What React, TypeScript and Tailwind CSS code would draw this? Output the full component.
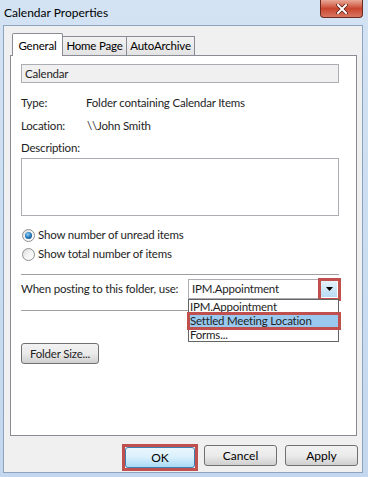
import React from "react";

const font = { fontFamily: 'Lato, "Noto Sans", Arial, sans-serif' };

function Radio({ checked }: { checked?: boolean }) {
  return (
    <span className="relative inline-flex h-[13px] w-[13px] shrink-0 items-center justify-center rounded-full border border-[#8e8f8f] bg-gradient-to-br from-[#dcdcdc] via-[#f4f4f4] to-[#ffffff]">
      {checked && (
        <span className="h-[7px] w-[7px] rounded-full bg-[radial-gradient(circle_at_40%_35%,#9ad2f5_0%,#2a7fc0_45%,#0e3f6a_100%)]" />
      )}
    </span>
  );
}

function Button({ children, def }: { children: React.ReactNode; def?: boolean }) {
  return (
    <div
      className={
        "flex h-[21px] items-center justify-center rounded-[3px] border text-[12px] text-black " +
        (def
          ? "w-[70px] border-[#3c7fb1] bg-gradient-to-b from-[#eaf6fd] via-[#d9f0fc] to-[#a7d9f5]"
          : "w-[73px] border-[#707070] bg-gradient-to-b from-[#f2f2f2] via-[#ebebeb] to-[#cfcfcf]")
      }
    >
      {children}
    </div>
  );
}

export default function App() {
  return (
    <div className="h-[477px] w-[368px] overflow-hidden whitespace-nowrap bg-gradient-to-b from-[#d3e3f4] to-[#c3d7ee]" style={font}>
      {/* title bar */}
      <div className="relative flex h-[25px] items-center pl-[4px]">
        <span className="text-[12px] text-black">Calendar Properties</span>
        <div className="absolute right-[5px] top-0 flex h-[18px] w-[43px] items-center justify-center rounded-b-[4px] border border-t-0 border-[#6b2a20] bg-gradient-to-b from-[#e8a999] via-[#c9452f] to-[#d8755f]">
          <svg width="12" height="10" viewBox="0 0 12 10">
            <path d="M2 1 L10 9 M10 1 L2 9" stroke="#5a1a10" strokeWidth="3.4" strokeLinecap="square" />
            <path d="M2 1 L10 9 M10 1 L2 9" stroke="#ffffff" strokeWidth="2" strokeLinecap="square" />
          </svg>
        </div>
      </div>

      {/* client area */}
      <div className="ml-[3px] mr-[5px] flex h-[448px] flex-col border border-[#8da4c0] bg-[#f0f0f0]">
        {/* tabs */}
        <div className="relative z-10 ml-[8px] mt-[7px] flex items-end text-[11.5px] tracking-[-0.2px]">
          <div className="flex h-[23px] w-[51px] items-start justify-center rounded-t-[2px] border border-b-0 border-[#898c95] bg-white pt-[3px]">
            General
          </div>
          <div className="mb-[1px] flex h-[19px] w-[64px] items-center justify-center border border-l-0 border-b-0 border-[#898c95] bg-gradient-to-b from-[#f2f2f2] to-[#e3e3e3]">
            Home Page
          </div>
          <div className="mb-[1px] flex h-[19px] w-[68px] items-center justify-center border border-l-0 border-b-0 border-[#898c95] bg-gradient-to-b from-[#f2f2f2] to-[#e3e3e3]">
            AutoArchive
          </div>
        </div>

        {/* panel */}
        <div className="relative ml-[6px] mr-[5px] -mt-[1px] flex h-[381px] flex-col border border-[#898c95] bg-white pl-[10px] pr-[17px] text-[11.5px] tracking-[-0.2px] text-[#1e1e1e]">
          <div className="mt-[8px] flex h-[19px] items-center border border-[#abadb3] bg-[#f0f0f0] pl-[3px]">
            Calendar
          </div>
          <div className="mt-[12px] flex h-[16px] items-center">
            <span className="w-[65px] shrink-0">Type:</span>
            <span>Folder containing Calendar Items</span>
          </div>
          <div className="mt-[7px] flex h-[16px] items-center">
            <span className="w-[66px] shrink-0">Location:</span>
            <span>\\John Smith</span>
          </div>
          <div className="mt-[6px] flex h-[16px] items-center">Description:</div>
          <div className="mt-[2px] h-[58px] border border-[#abadb3] bg-white" />

          <div className="mt-[11px] flex h-[16px] items-center gap-[3px] pl-[1px]">
            <Radio checked />
            <span>Show number of unread items</span>
          </div>
          <div className="mt-[3px] flex h-[16px] items-center gap-[3px] pl-[1px]">
            <Radio />
            <span>Show total number of items</span>
          </div>

          <div className="mt-[12px] h-px bg-[#a0a0a0]" />

          <div className="mt-[4px] flex items-center">
            <span className="w-[167px] shrink-0">When posting to this folder, use:</span>
            <div className="relative flex h-[20px] flex-1 items-center border border-[#abadb3] bg-white pl-[3px]">
              <span>IPM.Appointment</span>
              <div className="absolute right-[1px] top-[1px] flex h-[16px] w-[16px] items-center justify-center bg-gradient-to-b from-[#e6f3fb] to-[#b9dcf3]">
                <svg width="7" height="4" viewBox="0 0 7 4">
                  <path d="M0 0 H7 L3.5 4 Z" fill="#000" />
                </svg>
              </div>
              <div className="absolute -right-[3px] -top-[2px] h-[23px] w-[23px] border-[3px] border-[#c0504d]" />
              {/* dropdown list */}
              <div className="absolute -left-[1px] -right-[1px] top-[19px] z-20 flex flex-col border border-[#646464] bg-white">
                <div className="flex h-[14px] items-center pl-[1px] leading-none">IPM.Appointment</div>
                <div className="relative flex h-[14px] items-center bg-[#99c9ef] pl-[1px] leading-none">
                  Settled Meeting Location
                  <div className="absolute -left-[2px] -right-[3px] -top-[2px] -bottom-[2px] border-[3px] border-[#c0504d]" />
                </div>
                <div className="flex h-[13px] items-center pl-[1px] leading-none">Forms...</div>
              </div>
            </div>
          </div>

          <div className="mt-[11px] h-px bg-[#a0a0a0]" />

          <div className="mt-[32px] flex h-[21px] w-[78px] items-center justify-center rounded-[3px] border border-[#707070] bg-gradient-to-b from-[#f2f2f2] via-[#ebebeb] to-[#cfcfcf]">
            Folder Size...
          </div>
        </div>

        {/* bottom buttons */}
        <div className="mt-[8px] flex items-start pl-[118px]">
          <div className="border-[3px] border-[#c0504d]">
            <Button def>OK</Button>
          </div>
          <div className="ml-[6px] mt-[1px]">
            <Button>Cancel</Button>
          </div>
          <div className="ml-[8px] mt-[1px]">
            <Button>Apply</Button>
          </div>
        </div>
      </div>
    </div>
  );
}
